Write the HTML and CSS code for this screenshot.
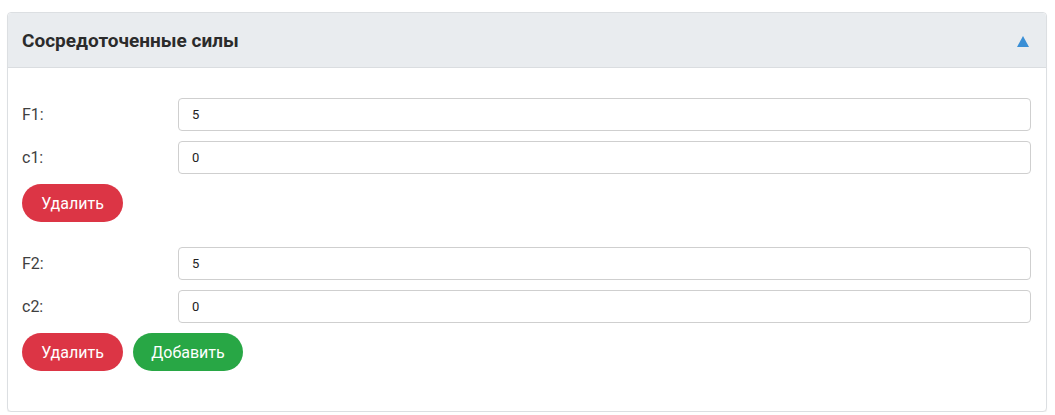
FILE: index.html
```html
<!DOCTYPE html>
<html lang="ru">
<head>
<meta charset="utf-8">
<link rel="stylesheet" href="styles.css">
</head>
<body>
<div class="card">
  <div class="card-header">
    <h2 class="title">Сосредоточенные силы</h2>
    <span class="toggle"></span>
  </div>
  <div class="card-body">
    <div class="group">
      <div class="row"><label class="label">F1:</label><input class="field" type="text" value="5"></div>
      <div class="row"><label class="label">c1:</label><input class="field" type="text" value="0"></div>
      <div class="actions"><button class="btn btn-red">Удалить</button></div>
    </div>
    <div class="group">
      <div class="row"><label class="label">F2:</label><input class="field" type="text" value="5"></div>
      <div class="row"><label class="label">c2:</label><input class="field" type="text" value="0"></div>
      <div class="actions"><button class="btn btn-red">Удалить</button><button class="btn btn-green">Добавить</button></div>
    </div>
  </div>
</div>
</body>
</html>
```

FILE: styles.css
```css
html, body { margin: 0; padding: 0; background: #fff; }
body {
  padding: 12px 8px 0 7px;
  font-family: Roboto, "Liberation Sans", sans-serif;
}
.card {
  border: 1px solid #dcdfe2;
  border-radius: 4px;
  background: #fff;
  box-shadow: 0 1px 1px rgba(0,0,0,0.06);
}
.card-header {
  height: 54px;
  background: #e9ecef;
  border-bottom: 1px solid #dadde0;
  border-radius: 4px 4px 0 0;
  display: flex;
  align-items: center;
  justify-content: space-between;
  padding: 0 17px 0 14px;
}
.title {
  margin: 0;
  font-size: 19px;
  font-weight: 700;
  color: #2b2b2b;
}
.toggle {
  width: 0; height: 0;
  border-left: 6px solid transparent;
  border-right: 6px solid transparent;
  border-bottom: 11px solid #3a8fd6;
  margin-top: 3px;
}
.card-body {
  padding: 30px 15px 40px 14px;
  display: flex;
  flex-direction: column;
  gap: 25px;
}
.group { display: flex; flex-direction: column; gap: 10px; }
.row { display: flex; align-items: center; }
.label {
  width: 156px;
  font-size: 16px;
  color: #3f3f3f;
}
.field {
  flex: 1;
  height: 33px;
  box-sizing: border-box;
  border: 1px solid #cfcfcf;
  border-radius: 4px;
  padding: 0 13px;
  font-family: Roboto, "Liberation Sans", sans-serif;
  font-size: 13px;
  color: #222;
  background: #fff;
}
.actions { display: flex; gap: 10px; }
.btn {
  height: 38px;
  border: none;
  border-radius: 19px;
  padding: 0 18px;
  font-family: Roboto, "Liberation Sans", sans-serif;
  font-size: 16px;
  color: #fff;
}
.btn-red { background: #dc3545; width: 101px; }
.btn-green { background: #28a745; width: 110px; }
```
